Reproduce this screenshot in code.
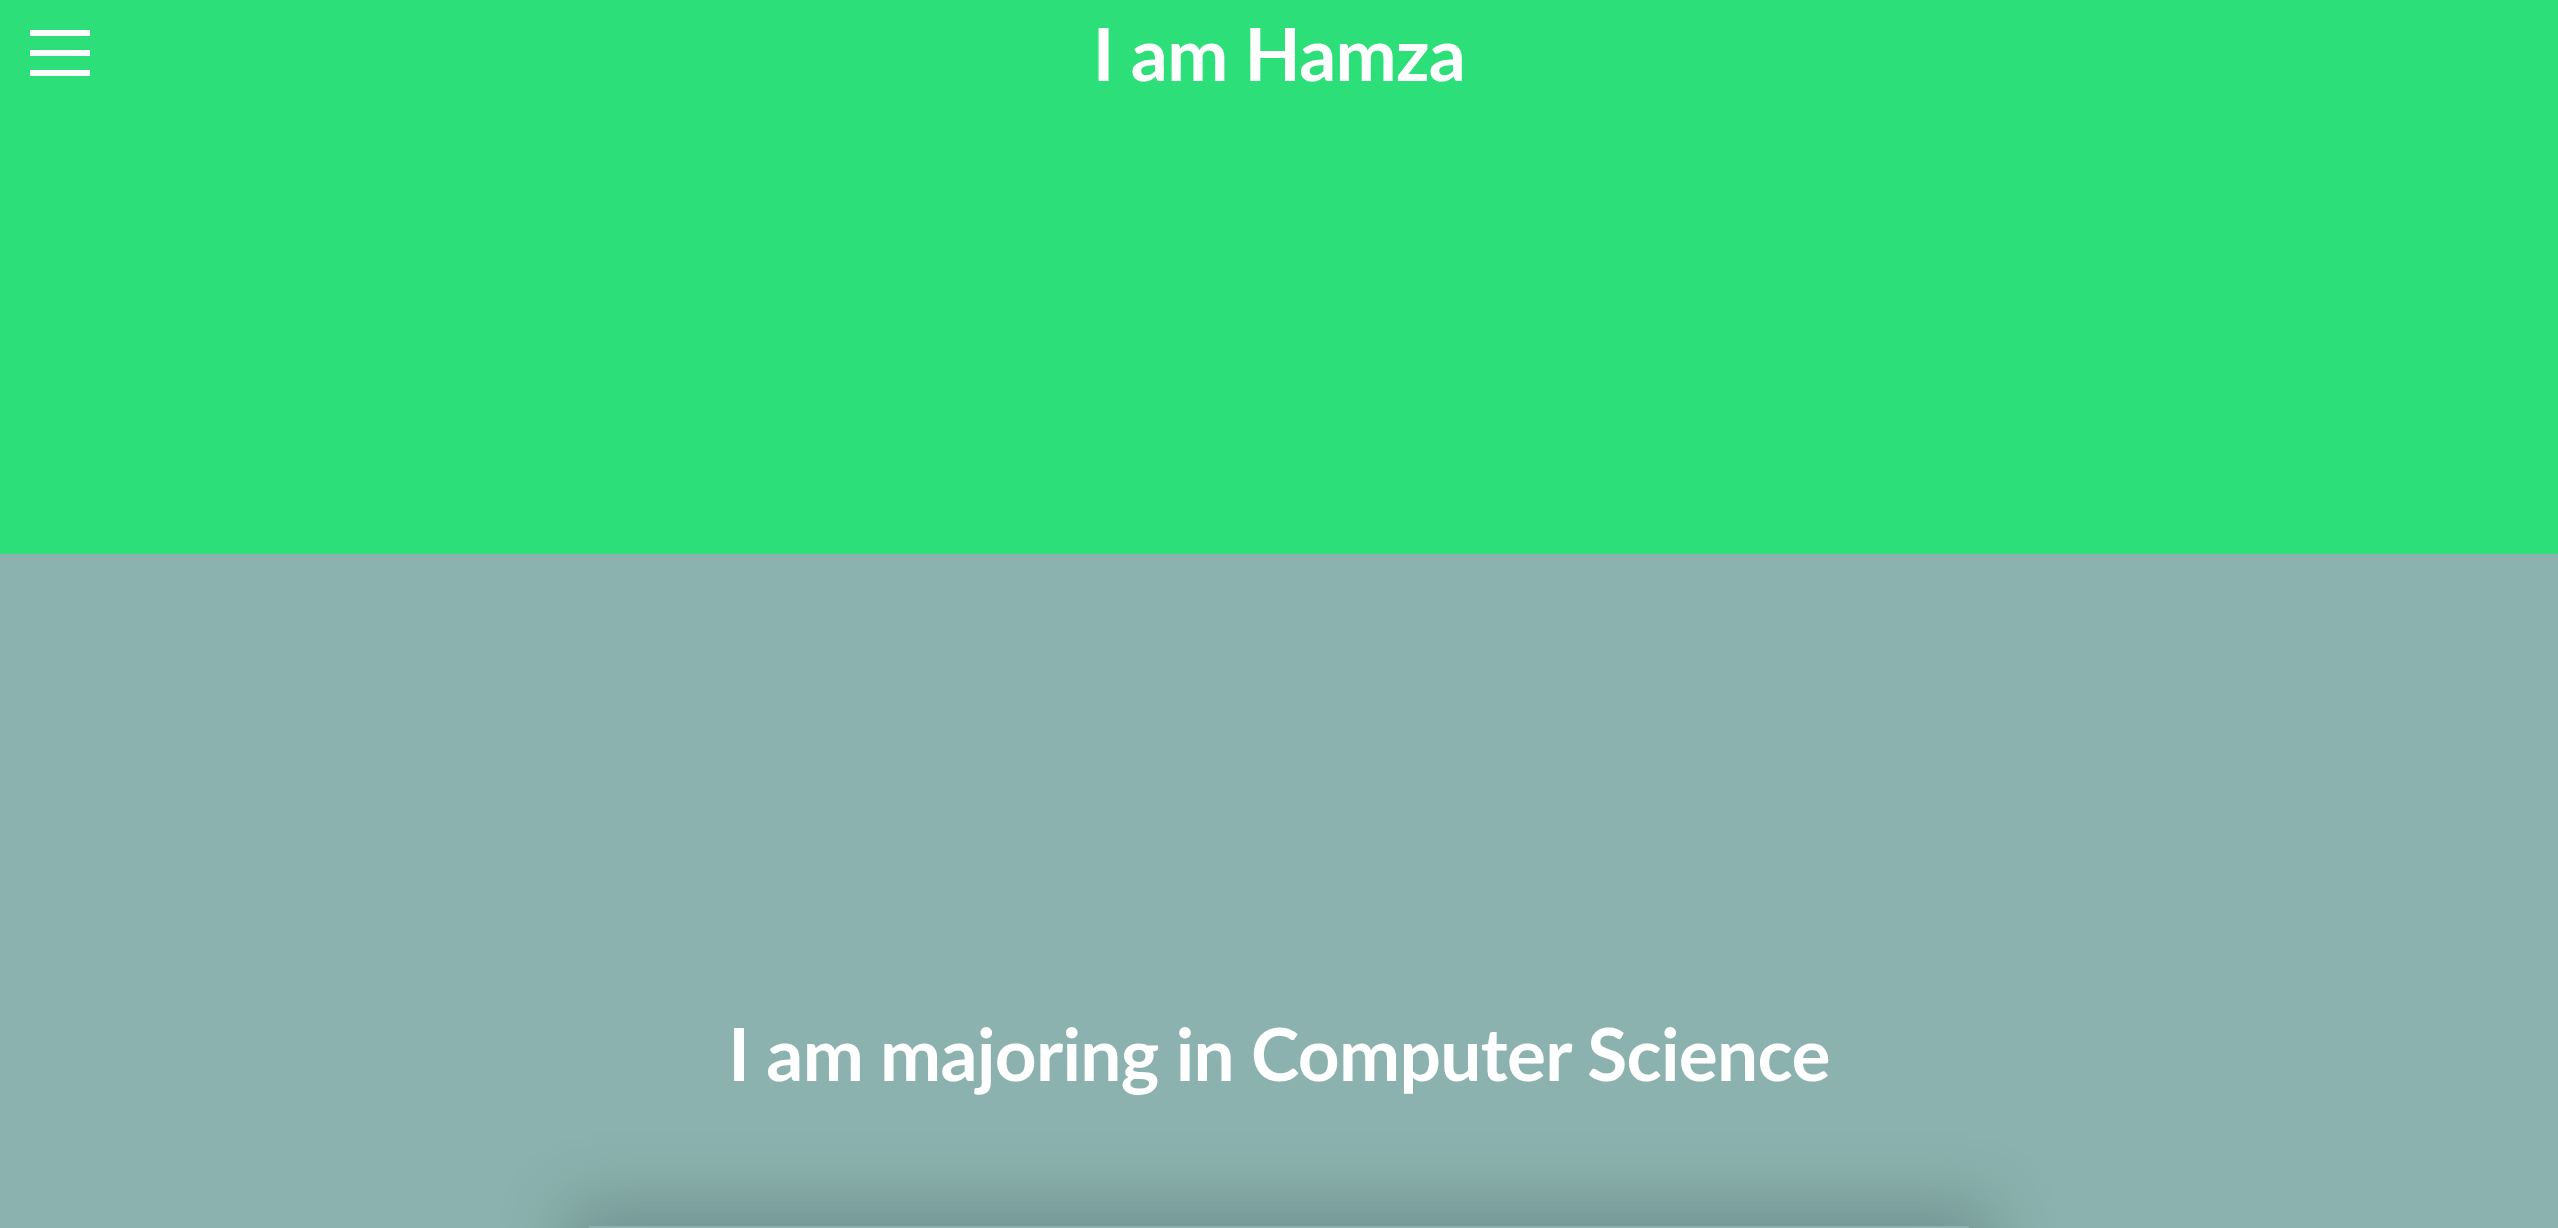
import React from "react";

function MenuIcon() {
  return (
    <svg width="60" height="46" viewBox="0 0 60 46" className="block">
      <rect x="0" y="0" width="60" height="6" fill="#ffffff" />
      <rect x="0" y="20" width="60" height="6" fill="#ffffff" />
      <rect x="0" y="40" width="60" height="6" fill="#ffffff" />
    </svg>
  );
}

export default function App() {
  return (
    <div
      className="min-h-screen w-full overflow-x-hidden bg-[#8bb2ae] text-white"
      style={{ fontFamily: "Lato, 'Open Sans', sans-serif" }}
    >
      {/* hero */}
      <header className="relative h-[554px] w-full bg-[#2cdf78]">
        <button className="absolute left-[30px] top-[30px]" aria-label="menu">
          <MenuIcon />
        </button>
        <h1 className="pt-[10px] text-center text-[73px] font-bold leading-[1.2] tracking-[-0.7px]">
          I am Hamza
        </h1>
      </header>

      {/* about */}
      <section className="w-full pt-[456px]">
        <h2 className="text-center text-[73px] font-bold leading-[1.2] tracking-[-0.7px]">
          I am majoring in Computer Science
        </h2>
        <div className="mx-auto mt-[128px] h-[600px] w-[1380px] bg-[#8bb2ae] shadow-[0_0_60px_20px_rgba(60,90,88,0.35)]" />
      </section>
    </div>
  );
}
